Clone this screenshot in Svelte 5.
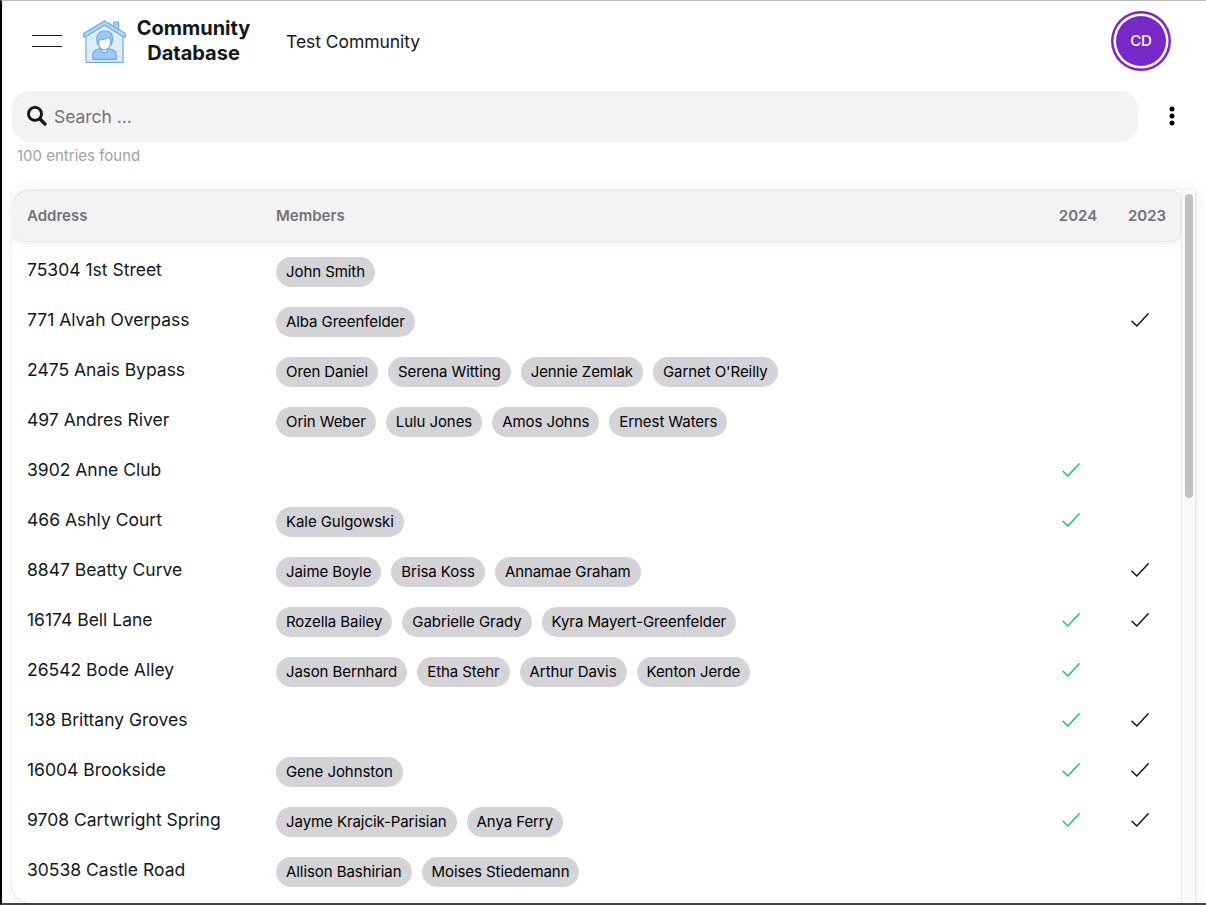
<script>
  const rows = [
    { address: '75304 1st Street', members: ['John Smith'], y24: false, y23: false },
    { address: '771 Alvah Overpass', members: ['Alba Greenfelder'], y24: false, y23: true },
    { address: '2475 Anais Bypass', members: ['Oren Daniel', 'Serena Witting', 'Jennie Zemlak', "Garnet O'Reilly"], y24: false, y23: false },
    { address: '497 Andres River', members: ['Orin Weber', 'Lulu Jones', 'Amos Johns', 'Ernest Waters'], y24: false, y23: false },
    { address: '3902 Anne Club', members: [], y24: true, y23: false },
    { address: '466 Ashly Court', members: ['Kale Gulgowski'], y24: true, y23: false },
    { address: '8847 Beatty Curve', members: ['Jaime Boyle', 'Brisa Koss', 'Annamae Graham'], y24: false, y23: true },
    { address: '16174 Bell Lane', members: ['Rozella Bailey', 'Gabrielle Grady', 'Kyra Mayert-Greenfelder'], y24: true, y23: true },
    { address: '26542 Bode Alley', members: ['Jason Bernhard', 'Etha Stehr', 'Arthur Davis', 'Kenton Jerde'], y24: true, y23: false },
    { address: '138 Brittany Groves', members: [], y24: true, y23: true },
    { address: '16004 Brookside', members: ['Gene Johnston'], y24: true, y23: true },
    { address: '9708 Cartwright Spring', members: ['Jayme Krajcik-Parisian', 'Anya Ferry'], y24: true, y23: true },
    { address: '30538 Castle Road', members: ['Allison Bashirian', 'Moises Stiedemann'], y24: false, y23: false }
  ];
</script>

{#snippet check(on, green)}
  <div class="check" class:green>
    {#if on}
      <svg width="20" height="20" viewBox="0 0 20 20" fill="none" stroke="currentColor" stroke-width="1.5" stroke-linecap="round" stroke-linejoin="round">
        <path d="M2 11.2 6.8 16 18.2 3.8" />
      </svg>
    {/if}
  </div>
{/snippet}

<div class="window">
  <header>
    <button class="menu" aria-label="Menu"><span></span><span></span></button>
    <svg class="logo" width="43" height="44" viewBox="0 0 44 44" preserveAspectRatio="none" stroke="#76a9de" stroke-width="1.2" stroke-linejoin="round">
      <path d="M31.5 2h5v10l-5-4z" fill="#a9d1fa" />
      <path d="M3 15 22 3l19 12v27.4H3z" fill="#dceefe" />
      <path d="M22 .8 43.3 13.5v3.7L40 16 22 5 4 16 .7 17.2v-3.7z" fill="#a9d4fb" />
      <path d="M10 39.3v-4q0-5 6-6.2l3-1.1h6l3 1.1q6 1.2 6 6.2v4z" fill="#98c9f8" />
      <path d="M19 27v4q3 3.5 6 0v-4z" fill="#fff" />
      <ellipse cx="22" cy="22" rx="6.5" ry="7.8" fill="#fff" />
      <path d="M15.6 25c-3-6-2-14 6.8-14S31.5 19 28.8 25l-.7-6-2-1.8q-5 3-9.8 2.7z" fill="#98c9f8" />
    </svg>
    <div class="brand">Community<br />Database</div>
    <div class="community">Test Community</div>
    <div class="avatar">CD</div>
  </header>

  <div class="tools">
    <div class="search">
      <svg width="20" height="20" viewBox="0 0 20 20" fill="none" stroke="#11181c" stroke-linecap="round">
        <circle cx="8" cy="7.9" r="6.5" stroke-width="2.9" />
        <path d="m13 13 5 5" stroke-width="3.2" />
      </svg>
      <span>Search ...</span>
    </div>
    <button class="more" aria-label="More">
      <svg width="6" height="20" viewBox="0 0 6 20"><circle cx="3" cy="3" r="2.5" /><circle cx="3" cy="10" r="2.5" /><circle cx="3" cy="17" r="2.5" /></svg>
    </button>
  </div>
  <div class="count">100 entries found</div>

  <div class="card">
    <div class="content">
      <div class="row head">
        <div>Address</div><div>Members</div><div class="year">2024</div><div class="year">2023</div>
      </div>
      <div class="rows">
        {#each rows as row}
          <div class="row">
            <div class="address">{row.address}</div>
            <div class="chips">
              {#each row.members as member}<span class="chip">{member}</span>{/each}
            </div>
            {@render check(row.y24, true)}
            {@render check(row.y23, false)}
          </div>
        {/each}
      </div>
    </div>
    <div class="track"><div class="thumb"></div></div>
  </div>
</div>

<style>
  :global(body) { overflow: hidden; }
  .window {
    box-sizing: border-box;
    width: 1206px;
    height: 905px;
    overflow: hidden;
    display: flex;
    flex-direction: column;
    border-top: 1px solid #bbbbbd;
    border-left: 2px solid #000;
    border-bottom: 2px solid #434345;
    background: #fff;
    color: #11181c;
    font: 17.5px/25px Inter, sans-serif;
  }
  button { border: 0; padding: 0; background: none; }
  header {
    height: 80px;
    flex: none;
    display: flex;
    align-items: center;
    padding: 0 35px 0 30px;
  }
  .menu {
    width: 30px;
    display: flex;
    flex-direction: column;
    gap: 10px;
    margin-right: 20px;
  }
  .menu span { height: 1px; background: #11181c; }
  .logo { margin: 2px 0 0 1px; }
  .brand {
    margin-left: 10px;
    width: 115px;
    font-size: 20px;
    font-weight: 700;
    text-align: center;
  }
  .community { margin-left: 35px; margin-top: 1px; letter-spacing: -.05px; }
  .avatar {
    box-sizing: border-box;
    width: 50px;
    height: 50px;
    margin: 0 5px 0 auto;
    border-radius: 50%;
    background: #7828c8;
    box-shadow: 0 0 0 2.5px #fff, 0 0 0 5px #7828c8;
    color: #fff;
    font-size: 15px;
    font-weight: 500;
    letter-spacing: -.2px;
    line-height: 50px;
    text-align: center;
  }
  .tools {
    height: 51px;
    flex: none;
    display: flex;
    margin: 10px 31px 0 10px;
    justify-content: space-between;
  }
  .search {
    box-sizing: border-box;
    width: 1126px;
    display: flex;
    align-items: center;
    gap: 7px;
    padding: 0 15px 1px;
    border-radius: 17.5px;
    background: #f3f3f3;
    color: #71717a;
  }
  .search svg { margin-top: -1px; }
  .search span { letter-spacing: -.05px; }
  .more { display: flex; align-items: center; }
  .more svg { margin-top: -2px; }
  .count {
    height: 25px;
    flex: none;
    margin: 1px 0 0 15px;
    color: #a1a1aa;
    font-size: 15px;
  }
  .card {
    flex: 1;
    min-height: 0;
    display: flex;
    margin: 22px 10px 0;
    overflow: hidden;
    border-radius: 17.5px 0 0 17.5px;
    box-shadow: 0 0 16px rgba(0, 0, 0, .07), 0 0 1px rgba(0, 0, 0, .3);
  }
  .content { flex: 1; min-width: 0; }
  .row {
    height: 50px;
    display: grid;
    grid-template-columns: 249px 1fr 69px 69px;
    padding-left: 15px;
  }
  .head {
    align-items: center;
    border: 1px solid #e6e6e7;
    border-left: 0;
    border-radius: 17.5px 10px 10px 10px;
    background: #f3f3f3;
    box-shadow: 0 2px 10px rgba(0, 0, 0, .06);
    color: #71717a;
    font-size: 15px;
    font-weight: 600;
  }
  .head div { margin-top: -2px; }
  .head .year { padding-left: 3px; text-align: center; }
  .rows { padding-top: 4px; }
  .address { padding-top: 11px; }
  .chips { display: flex; gap: 10px; padding-top: 11px; }
  .chip {
    height: 30px;
    padding: 0 10px;
    border-radius: 15px;
    background: #d4d4d8;
    color: #000;
    font-size: 15px;
    letter-spacing: -.07px;
    line-height: 30px;
    white-space: nowrap;
  }
  .check { padding: 13.5px 0 0 18px; }
  .check svg { display: block; }
  .green { color: #17c964; }
  .track {
    box-sizing: border-box;
    width: 15px;
    padding: 4px 2px 0 3px;
    border: solid #e8e8e8;
    border-width: 0 1px;
    background: #fafafa;
  }
  .thumb { width: 8px; height: 304px; border-radius: 4px; background: #c1c1c1; }
</style>
